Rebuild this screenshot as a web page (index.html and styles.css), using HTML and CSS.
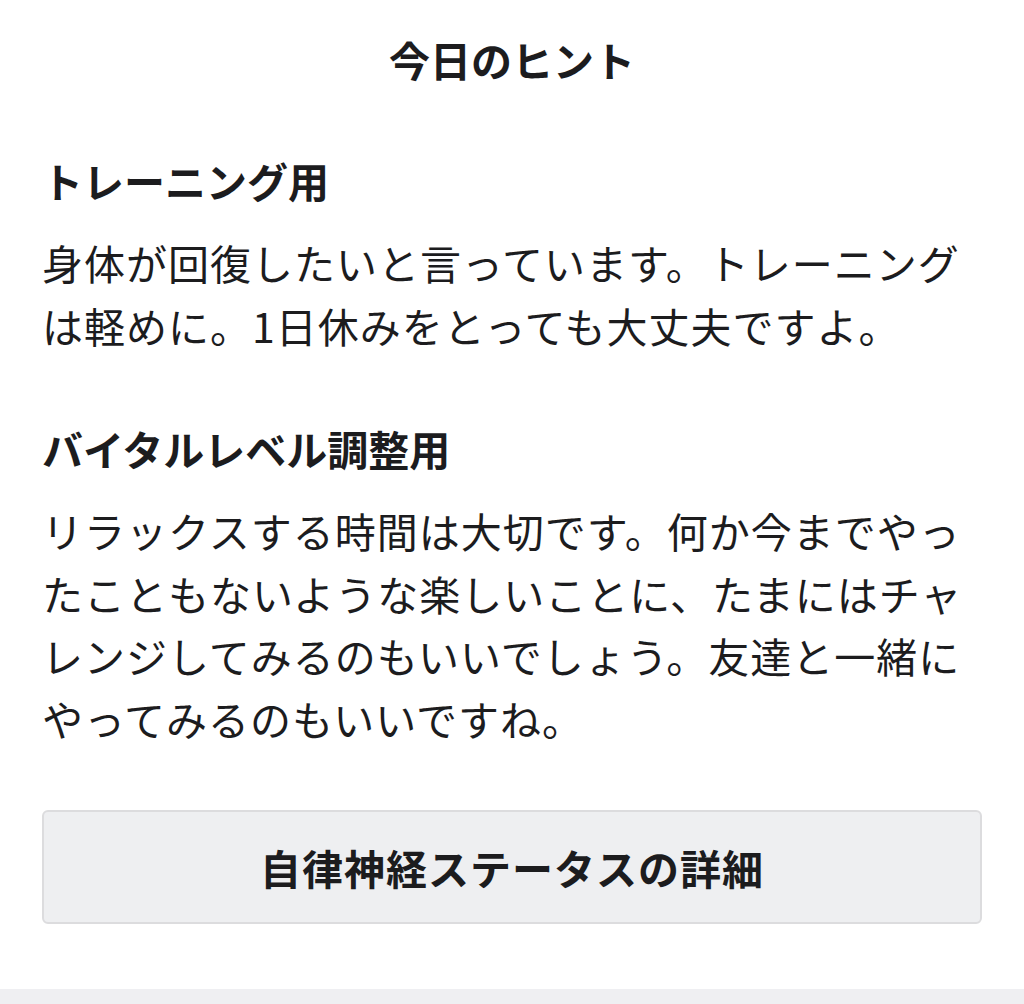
FILE: index.html
```html
<!DOCTYPE html>
<html lang="ja">
<head>
  <meta charset="UTF-8">
  <title>今日のヒント</title>
  <link rel="stylesheet" href="styles.css">
</head>
<body>

<div class="page">
  <h1 class="title">今日のヒント</h1>

  <section class="hint">
    <h2>トレーニング用</h2>
    <p>身体が回復したいと言っています。トレーニングは軽めに。1日休みをとっても大丈夫ですよ。</p>
  </section>

  <section class="hint">
    <h2>バイタルレベル調整用</h2>
    <p>リラックスする時間は大切です。何か今までやったこともないような楽しいことに、たまにはチャレンジしてみるのもいいでしょう。友達と一緒にやってみるのもいいですね。</p>
  </section>

  <button class="detail-btn" type="button">自律神経ステータスの詳細</button>
</div>

<div class="footer-band"></div>

</body>
</html>
```

FILE: styles.css
```css
html, body {
  margin: 0;
  padding: 0;
}
body {
  font-family: "Noto Sans CJK JP", "Noto Sans", sans-serif;
  background: #ffffff;
  color: #1c1c1e;
  height: 1004px;
  display: flex;
  flex-direction: column;
}
.page {
  flex: 1;
  padding: 28px 42px 0;
}
.title {
  margin: 0;
  font-size: 41px;
  font-weight: 700;
  line-height: 62px;
  text-align: center;
}
.hint {
  margin-top: 59px;
}
.hint + .hint {
  margin-top: 61px;
}
.hint h2 {
  margin: 0;
  font-size: 41px;
  font-weight: 700;
  line-height: 62px;
}
.hint p {
  margin: 20px 0 0;
  font-size: 41px;
  font-weight: 400;
  line-height: 62.5px;
  letter-spacing: 1px;
}
.detail-btn {
  display: block;
  width: 100%;
  height: 114px;
  margin-top: 61px;
  background: #eeeff1;
  border: 2px solid #dcdcde;
  border-radius: 6px;
  font-family: inherit;
  font-size: 41px;
  font-weight: 700;
  letter-spacing: 1px;
  color: #1c1c1e;
  cursor: pointer;
}
.footer-band {
  height: 15px;
  background: #efeff2;
}
```
